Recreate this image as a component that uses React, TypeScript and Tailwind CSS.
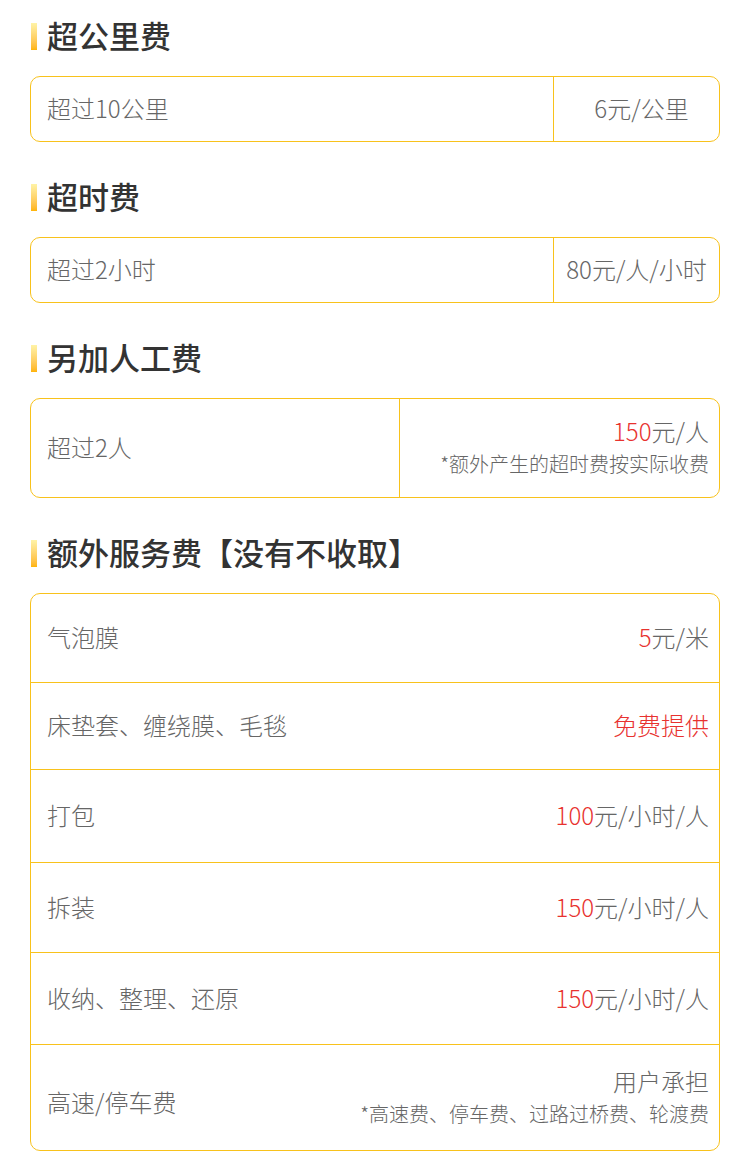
import React from 'react';

const font = { fontFamily: '"Noto Sans CJK SC", "Noto Sans", sans-serif' };

function Heading({ children, first }: { children: React.ReactNode; first?: boolean }) {
  return (
    <div className={`flex items-center h-[40px] mb-[20px] ${first ? 'mt-[16px]' : 'mt-[35px]'}`}>
      <span className="w-[6px] h-[27px] ml-px mr-[10px] bg-gradient-to-b from-[#fff3a6] to-[#ffb400]" />
      <span className="text-[31px] leading-none font-medium text-[#333] mb-[4px]">{children}</span>
    </div>
  );
}

function Price({ num, unit }: { num: string; unit: string }) {
  return (
    <span>
      <span className="text-[#e8322f]">{num}</span>
      {unit}
    </span>
  );
}

const rows: { label: string; h: string; right: React.ReactNode; note?: string }[] = [
  { label: '气泡膜', h: 'h-[88px]', right: <Price num="5" unit="元/米" /> },
  { label: '床垫套、缠绕膜、毛毯', h: 'h-[87px]', right: <span className="text-[#e8322f]">免费提供</span> },
  { label: '打包', h: 'h-[93px]', right: <Price num="100" unit="元/小时/人" /> },
  { label: '拆装', h: 'h-[90px]', right: <Price num="150" unit="元/小时/人" /> },
  { label: '收纳、整理、还原', h: 'h-[92px]', right: <Price num="150" unit="元/小时/人" /> },
  {
    label: '高速/停车费',
    h: 'h-[106px]',
    right: <span>用户承担</span>,
    note: '*高速费、停车费、过路过桥费、轮渡费',
  },
];

export default function App() {
  return (
    <div style={font} className="w-[750px] min-h-[1176px] bg-white px-[30px] pb-[26px] text-[#666] font-light">
      <Heading first>超公里费</Heading>
      <div className="flex h-[66px] border border-[#f8c21c] rounded-[10px] text-[24px]">
        <div className="flex-1 flex items-center pl-[16px] pb-[2px]">超过10公里</div>
        <div className="w-[166px] flex items-center justify-center border-l border-[#f8c21c] pl-[10px] pb-[2px]">6元/公里</div>
      </div>

      <Heading>超时费</Heading>
      <div className="flex h-[66px] border border-[#f8c21c] rounded-[10px] text-[24px]">
        <div className="flex-1 flex items-center pl-[16px] pb-[2px]">超过2小时</div>
        <div className="w-[166px] flex items-center justify-center border-l border-[#f8c21c] pb-[2px]">80元/人/小时</div>
      </div>

      <Heading>另加人工费</Heading>
      <div className="flex h-[100px] border border-[#f8c21c] rounded-[10px] text-[24px]">
        <div className="w-[369px] flex items-center pl-[16px] border-r border-[#f8c21c] pb-[2px]">超过2人</div>
        <div className="flex-1 flex flex-col justify-center items-end pr-[10px] pb-[2px]">
          <div className="leading-[32px]">
            <Price num="150" unit="元/人" />
          </div>
          <div className="text-[20px] leading-[30px] mt-[2px]">*额外产生的超时费按实际收费</div>
        </div>
      </div>

      <Heading>额外服务费【没有不收取】</Heading>
      <div className="border border-[#f8c21c] rounded-[10px] text-[24px]">
        {rows.map((r, i) => (
          <div
            key={r.label}
            className={`flex items-center justify-between pl-[16px] pr-[10px] pb-[2px] ${r.h} ${i > 0 ? 'border-t border-[#f8c21c]' : ''}`}
          >
            <span className={r.note ? 'mt-[10px]' : ''}>{r.label}</span>
            <div className="flex flex-col items-end">
              <div className="leading-[32px]">{r.right}</div>
              {r.note && <div className="text-[20px] leading-[30px] mt-[2px]">{r.note}</div>}
            </div>
          </div>
        ))}
      </div>
    </div>
  );
}
